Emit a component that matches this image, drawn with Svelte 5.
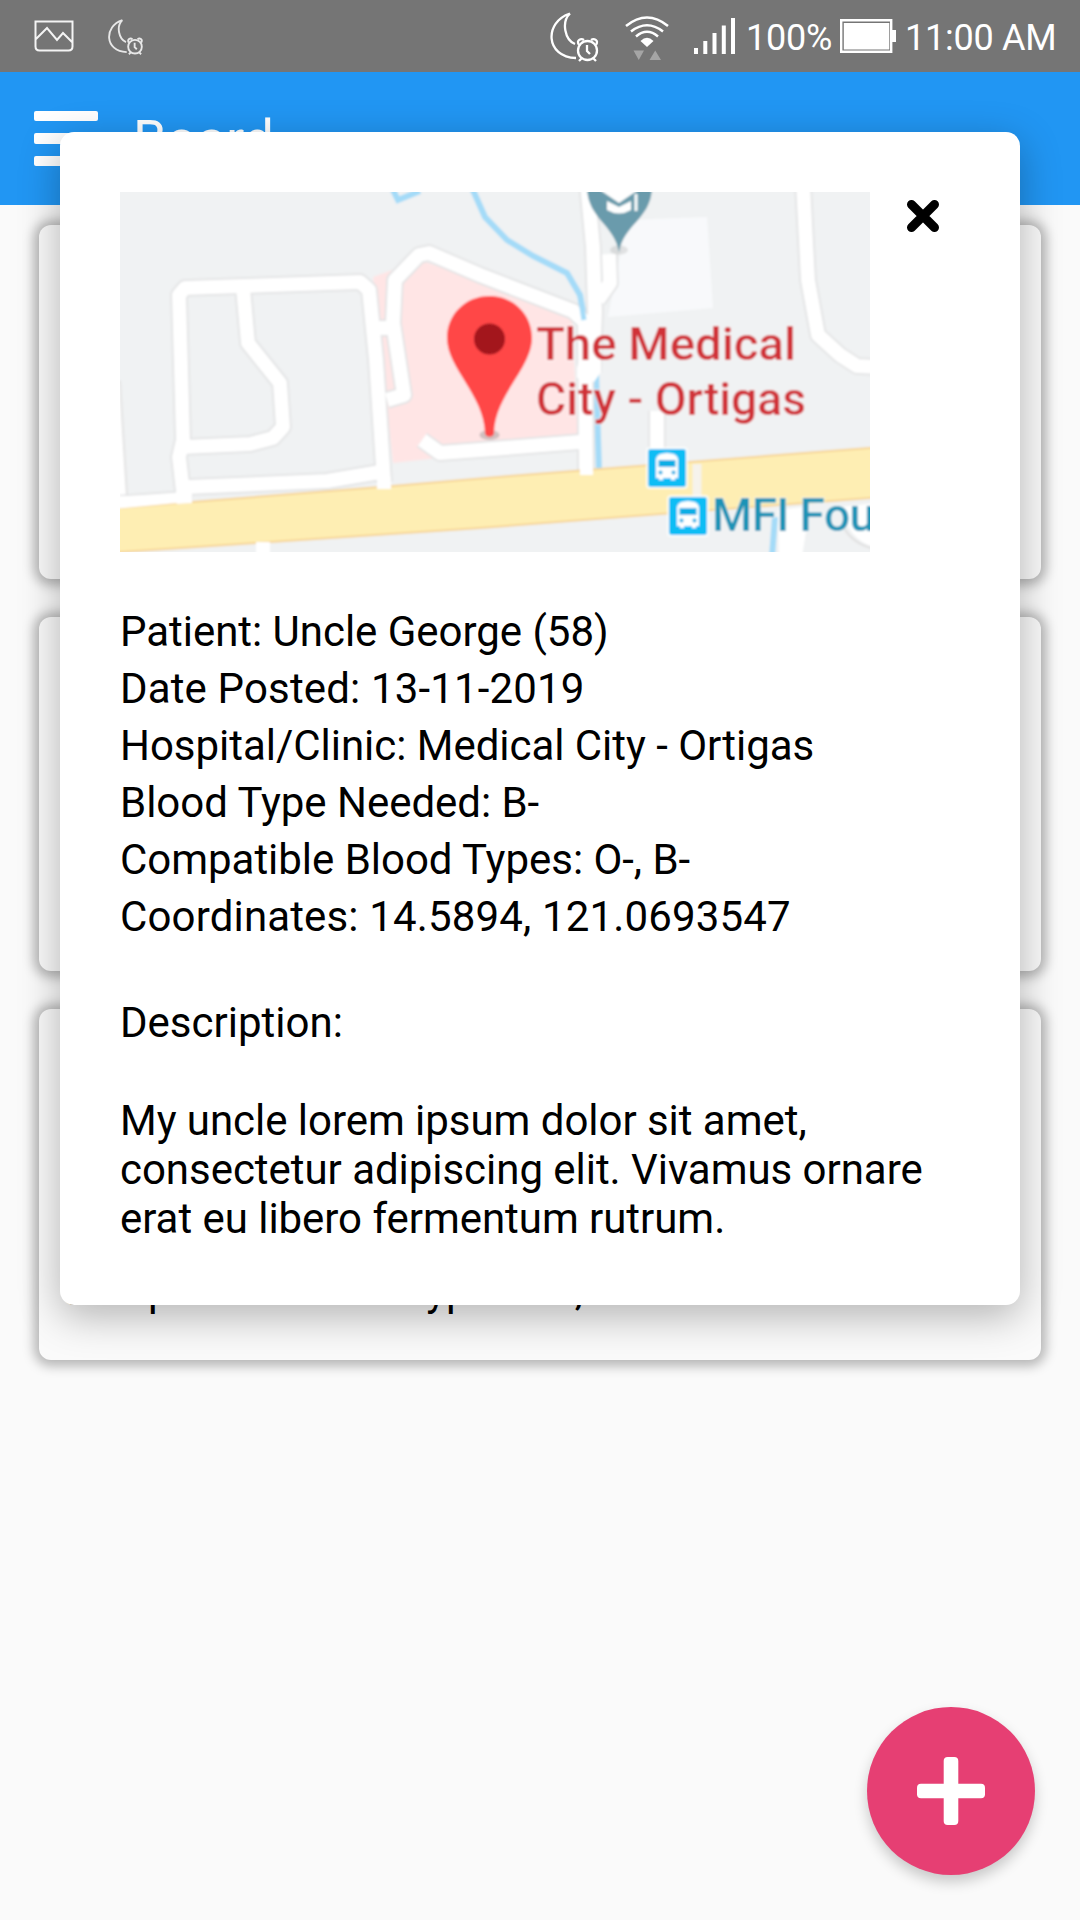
<script>
  const cards = [
    { id: 1, lines: [] },
    { id: 2, lines: [] },
    { id: 3, lines: ['Compatible Blood Types: O-, B-'] }
  ];
  const details = [
    { text: 'Patient: Uncle George (58)' },
    { text: 'Date Posted: 13-11-2019', numeric: true },
    { text: 'Hospital/Clinic: Medical City - Ortigas' },
    { text: 'Blood Type Needed: B-' },
    { text: 'Compatible Blood Types: O-, B-' },
    { text: 'Coordinates: 14.5894, 121.0693547', numeric: true }
  ];
  const roads = [
    'M64 308 L59 265 L63 248 L59 103 L65 96 L123 94 L240 90 L249 98 L256 168 L264 290',
    'M123 96 L128 151 L160 191 L163 235 L153 246 L130 252 L63 255',
    'M67 295 L207 289 L260 280',
    'M-8 312 L65 307',
    'M257 136 L273 136',
    'M267 208 L284 203 L273 131 L275 88 L299 63 L309 61 L360 83 L453 119 L465 130 L466 281',
    'M302 248 L320 261 L360 258 L460 250',
    'M467 -8 L473 55 L475 120 L473 180',
    'M489 62 L490 91 L478 108',
    'M683 -8 L688 88 L698 143 L720 163 L737 174 L758 175'
  ];
</script>

{#snippet moonClock()}
  <path d="M20 1.5C-6 10-5 45 26 46M20 1.5C11 10 15 28 25 32" />
  <circle cx="37.500" cy="38.500" r="9.500" />
  <path d="M37 33v6l3 3M32 46l-3 3M43 46l3 3M29 33c-3-5 2-7 5-5M46 33c3-5-2-7-5-5" />
{/snippet}

<div class="phone">
  <header class="status">
    <svg class="picture" viewBox="0 0 40 32" fill="none" stroke="#f4f4f4" stroke-width="2">
      <path d="M1.500 1.500h37v25q0 4-4 4h-29q-4 0-4-4zM2 19 13 8l10 12 6-7 9 9" />
    </svg>
    <svg class="moon small" viewBox="0 0 50 50" fill="none" stroke="#e8e8e8" stroke-width="2.600">{@render moonClock()}</svg>
    <span class="fill"></span>
    <svg class="moon" viewBox="0 0 50 50" fill="none" stroke="#fff" stroke-width="2.300">{@render moonClock()}</svg>
    <svg class="wifi" viewBox="0 0 44 44" fill="none" stroke="#fff" stroke-width="2.500">
      <path d="M1 10Q22-7 43 10M6 15.500Q22 3 38 15.500M11 20.500Q22 11 33 20.500" />
      <path d="M15.500 25Q22 18.500 28.500 25L22 31z" fill="#fff" stroke="none" />
      <path d="M8.500 34.500h10.500l-5.250 9.500zM24.500 44h11.500l-5.750-9.500z" fill="#a5a5a5" stroke="none" />
    </svg>
    <svg class="signal" viewBox="0 0 42 36" fill="#fff">
      <path d="M0 30h4v6h-4zM9.300 23h4v13h-4zM18.500 15h4v21h-4zM27.800 7.500h4v28.500h-4zM37 0h4v36h-4z" />
    </svg>
    <span class="percent">100%</span>
    <svg class="battery" viewBox="0 0 56 34">
      <path d="M1.200 1.200h50v31.600h-50z" fill="none" stroke="#fff" stroke-width="2.400" />
      <path d="M3.800 4h45.500v26.500h-45.500zM52 11h4v12h-4z" fill="#fff" />
    </svg>
    <time>11:00 AM</time>
  </header>

  <nav>
    <div class="burger"><i></i><i></i><i></i></div>
    <h1>Board</h1>
  </nav>

  <main>
    {#each cards as card (card.id)}
      <article>
        {#each card.lines as line}<p>{line}</p>{/each}
      </article>
    {/each}
  </main>

  <button class="fab" aria-label="Add">
    <svg viewBox="0 0 68 68" fill="#fff"><rect x="26.700" width="14.600" height="68" rx="4" /><rect y="26.700" width="68" height="14.600" rx="4" /></svg>
  </button>

  <section class="modal">
    <div class="top">
      <svg class="map" viewBox="0 0 750 360">
        <defs>
          <filter id="soft" x="0" y="0" width="100%" height="100%"><feGaussianBlur stdDeviation="0.9" /></filter>
          <g id="bus">
            <rect x="-2" y="-2" width="42" height="42" rx="4" fill="#fff" opacity=".8" />
            <rect width="38" height="38" rx="3" fill="#10bdf5" />
            <path d="M8 10Q9 4 19 4T30 10V29H27V31H23V29H15V31H11V29H8z" fill="#fff" />
            <path d="M10.500 11h17v7h-17z" fill="#10aee5" />
            <circle cx="12.500" cy="23.500" r="2" fill="#10aee5" /><circle cx="25.500" cy="23.500" r="2" fill="#10aee5" />
          </g>
        </defs>
        <rect width="750" height="360" fill="#f0f2f3" />
        <g filter="url(#soft)">
          <rect x="-10" y="-10" width="770" height="380" fill="#f0f2f3" />
          <path d="M507 28 587 25 593 116 488 125z" fill="#f8f9fb" />
          <path d="M253 85 300 68 452 121 458 250 273 271z" fill="#ffe5e5" />
          <path d="M-8 190H0L7 304-8 312z" fill="#fff" stroke="#e3e3e3" stroke-width="2" />
          <path d="M273 -2 278 8 300 -1M352 -4 365 25 387 48 413 64 447 81 460 103 466 135M476 180 479 279M655 325 652 365" fill="none" stroke="#a4dbf8" stroke-width="6" />
          <path d="M537 219V262" stroke="#e3e3e3" stroke-width="17" />
          {#each roads as d}<path {d} class="edge" />{/each}
          {#each roads as d}<path {d} class="road" />{/each}
          <path d="M447 81 460 103 464 128" fill="none" stroke="#a4dbf8" stroke-width="5" />
          <path d="M537 219V262" stroke="#fff" stroke-width="14" />
          <path d="M468 130 481 126V180L474 190 457 186V176z" fill="#fff" />
          <path d="M-5 316.500 72 310 273 294 390 284 755 255.500V305.500L360 336-5 360.500z" fill="#feeeb3" stroke="#f7d596" stroke-width="2" />
          <path d="M-5 300 0 304 57 303V311L-5 317zM57 300H72V311L57 312zM257 285H271V297H257zM460 275H473V283H460z" fill="#fff" />
          <path d="M577 272V318" stroke="#f6f3ec" stroke-width="9" />
          <path d="M143 350V365" stroke="#fff" stroke-width="14" />
          <path d="M658 318 690 314 682 365H659zM720 315 755 311V355Q730 350 720 315z" fill="#fff" />
          <path d="M723 334Q732 352 755 357" fill="none" stroke="#e0e0e0" stroke-width="2" />

          <ellipse cx="499" cy="58" rx="9" ry="4.500" fill="#777" opacity=".18" />
          <path d="M467 -4C468 27 494 32 499 60 504 32 531 27 532 -4z" fill="#6b9bac" />
          <path d="M477 -4 499 11 521 -4z" fill="#fff" />
          <path d="M487 9 499 15 511 9V18Q499 25 487 18z" fill="#fff" />
          <path d="M516 2V19" stroke="#fff" stroke-width="3" />

          <ellipse cx="369.500" cy="243" rx="10" ry="5" fill="#777" opacity=".35" />
          <path d="M369.500 104C345 104 327 123 327 146 327 176 364 203 365 241 365 246 374 246 374 241 375 203 412 176 412 146 412 123 394 104 369.500 104z" fill="#ff4646" />
          <circle cx="369.500" cy="147" r="15.500" fill="#a3121f" />

          <g class="halo">
            <text x="416" y="168" textLength="260" lengthAdjust="spacingAndGlyphs">The Medical</text>
            <text x="416" y="223" textLength="270" lengthAdjust="spacingAndGlyphs">City - Ortigas</text>
          </g>
          <use href="#bus" x="528" y="257" />
          <use href="#bus" x="549" y="305" />
          <text class="halo transit" x="592" y="339">MFI Fou</text>
        </g>
      </svg>
      <button class="close" aria-label="Close">
        <svg viewBox="0 0 34 34" stroke="#000" stroke-width="9" stroke-linecap="round"><path d="M5.500 5.500 28.500 28.500M28.500 5.500 5.500 28.500" /></svg>
      </button>
    </div>
    <div class="details">
      {#each details as line}<p class:numeric={line.numeric}>{line.text}</p>{/each}
    </div>
    <h2>Description:</h2>
    <p class="description">My uncle lorem ipsum dolor sit amet, consectetur adipiscing elit. Vivamus ornare erat eu libero fermentum rutrum.</p>
  </section>
</div>

<style>
  :global(body) { margin: 0; background: #fafafa; }
  * { box-sizing: border-box; }
  p, h1, h2 { margin: 0; font-weight: 400; }
  button { border: 0; padding: 0; background: none; }
  svg { display: block; flex: none; }
  .phone { position: relative; width: 1080px; height: 1920px; overflow: hidden; background: #fafafa; font-family: Roboto, sans-serif; color: #000; }
  .status { height: 72px; background: #757575; color: #fff; display: flex; align-items: flex-start; font-size: 36px; line-height: 42px; white-space: nowrap; }
  .picture { width: 40px; height: 32px; margin: 20px 0 0 34px; }
  .moon { width: 50px; height: 50px; margin-top: 12px; }
  .moon.small { width: 36px; height: 36px; margin: 19px 0 0 34px; }
  .fill { flex: 1; }
  .wifi { width: 44px; height: 44px; margin: 16px 0 0 25px; }
  .signal { width: 42px; height: 36px; margin: 18px 0 0 25px; }
  .percent { width: 86px; margin: 17px 0 0 10px; letter-spacing: -.2px; }
  .battery { width: 56px; height: 34px; margin: 19px 0 0 8px; }
  time { width: 152px; margin: 17px 23px 0 9px; letter-spacing: -.25px; }
  nav { height: 133px; background: #2196f3; color: #fff; display: flex; align-items: center; padding-left: 34px; gap: 35px; }
  .burger { width: 64px; display: grid; gap: 12.500px; }
  .burger i { height: 10.300px; border-radius: 2px; background: #fff; }
  h1 { font-size: 54px; line-height: 64px; padding-top: 3px; letter-spacing: -.3px; }
  main { padding: 20px 39px; display: grid; gap: 38px; }
  article { height: 354px; border-radius: 12px; background: #fafafa; box-shadow: 0 1px 12px 5px rgba(0, 0, 0, .28); padding: 0 21px 45px; display: flex; flex-direction: column; justify-content: flex-end; }
  article:last-child { height: 351px; }
  article p { font-size: 42px; line-height: 49px; }
  .fab { position: absolute; left: 867px; top: 1707px; width: 168px; height: 168px; border-radius: 50%; background: #e63f73; box-shadow: 0 7px 14px rgba(0, 0, 0, .2); display: grid; place-items: center; }
  .fab svg { width: 68px; height: 68px; }
  .modal { position: absolute; left: 60px; top: 132px; width: 960px; height: 1173px; border-radius: 14px; background: #fff; padding: 60px; box-shadow: 0 11px 40px rgba(0, 0, 0, .29); }
  .top { display: flex; gap: 36px; }
  .map { width: 750px; height: 360px; overflow: hidden; }
  .edge, .road { fill: none; stroke-linejoin: round; stroke-width: 17.500; stroke: #e2e3e4; }
  .road { stroke: #fff; stroke-width: 14; }
  .halo { font-size: 46px; font-weight: 500; fill: #d03338; stroke: #fff; stroke-width: 2px; stroke-opacity: .6; paint-order: stroke; }
  .transit { fill: #1c93b6; letter-spacing: -.6px; }
  .close { width: 34px; height: 34px; margin-top: 7px; }
  .close svg { width: 34px; height: 34px; }
  .details { margin-top: 51px; font-size: 42px; line-height: 57px; white-space: nowrap; letter-spacing: -.03px; }
  .details .numeric { letter-spacing: .15px; }
  h2 { margin-top: 53px; font-size: 42px; line-height: 49px; }
  .description { margin-top: 49px; font-size: 42px; line-height: 49px; letter-spacing: -.04px; }
</style>
